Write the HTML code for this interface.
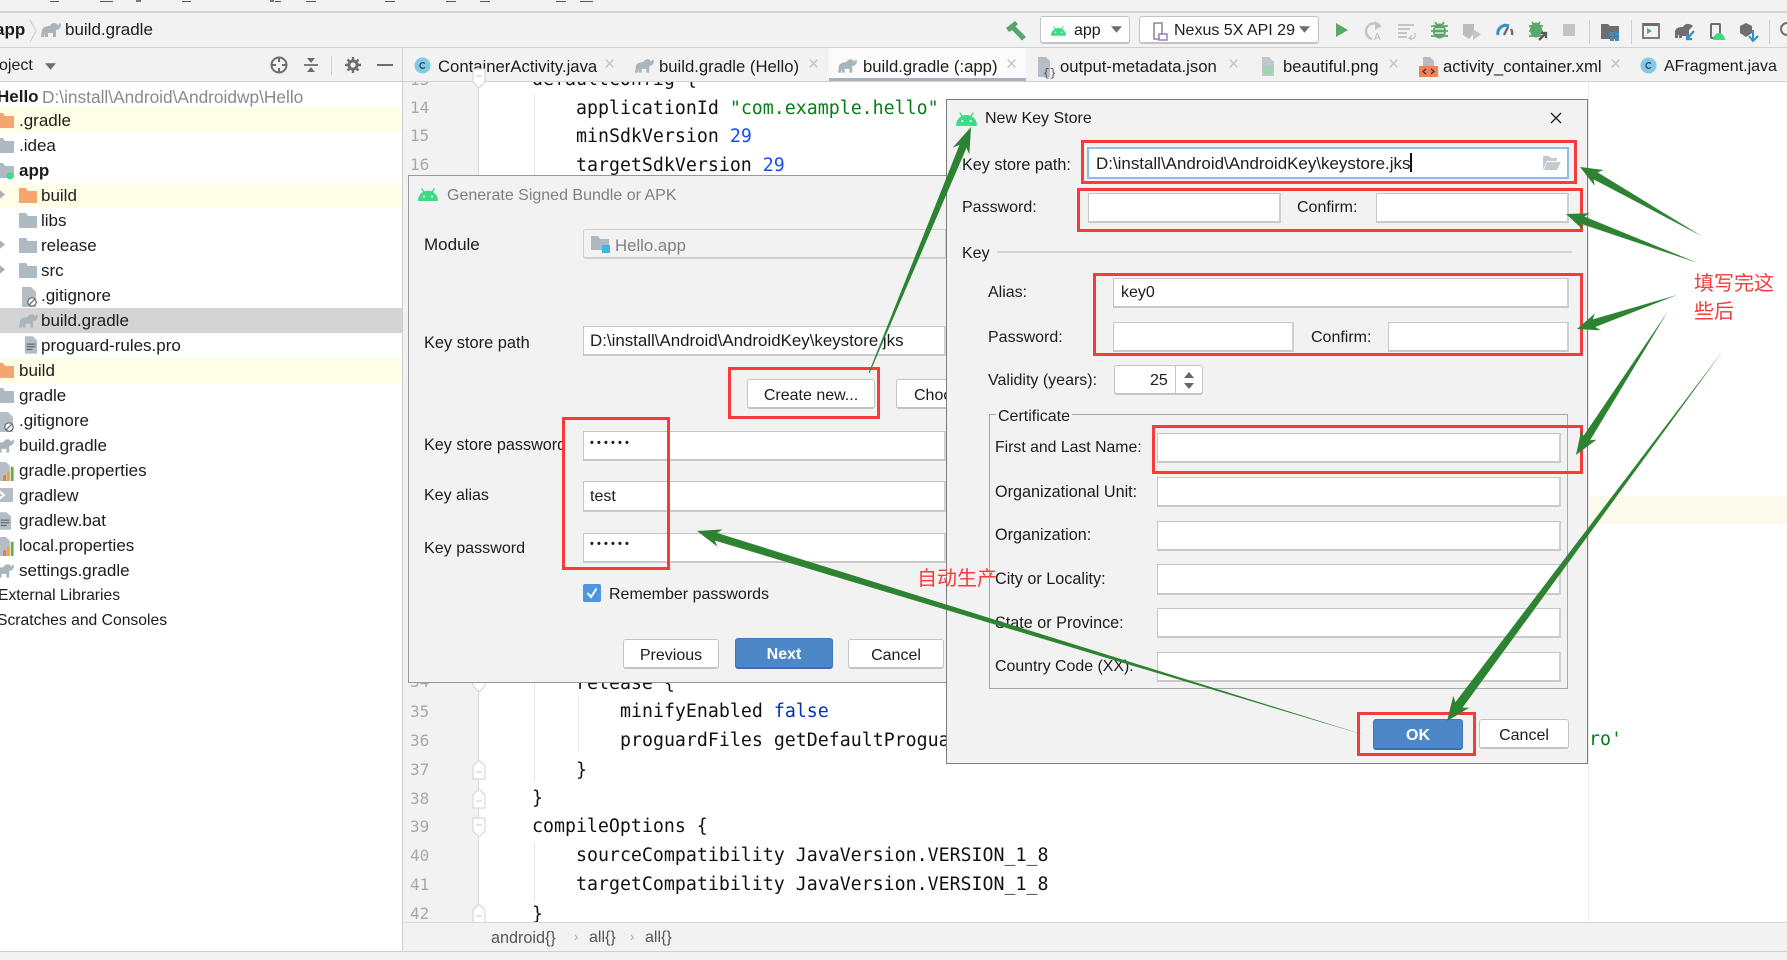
<!DOCTYPE html>
<html><head><meta charset="utf-8"><style>
html,body{margin:0;padding:0;background:#fff}
#p{position:relative;width:1787px;height:960px;overflow:hidden;background:#fff;font:17px/24px "Liberation Sans","Noto Sans CJK SC",sans-serif;color:#1c1c1c}
#p div,#p span.a{position:absolute}
.t{position:absolute;white-space:pre;line-height:24px}
.k{font-size:16px}
.c{position:absolute;white-space:pre;font:18.25px/24px "DejaVu Sans Mono",monospace;color:#111}
.n{position:absolute;font:16px/24px "DejaVu Sans Mono",monospace;color:#a8a8a8;left:410px}
.f{background:#fff;border:1px solid #c6c6c6;border-bottom:2px solid #c9c9c9;border-right:2px solid #d0d0d0;box-sizing:border-box}
.b{background:#fff;border:1px solid #c4c4c4;border-bottom:2px solid #c4c4c4;border-radius:3px;box-sizing:border-box;text-align:center;font-size:16px;line-height:28px}
.bl{background:#4d87c7;border:1px solid #3f78b8;border-bottom:2px solid #3a70ad;border-radius:3px;box-sizing:border-box;text-align:center;font-size:16px;font-weight:bold;line-height:28px;color:#fff}
.r{border:3px solid #f73a3a;box-sizing:border-box}
.x{position:absolute;color:#c4c4c4;font-size:19px;line-height:20px}
svg.i{position:absolute;overflow:visible}
.tab{position:absolute;top:57px;font-size:16.7px;line-height:20px;white-space:pre}
.lab{position:absolute;font-size:16px;white-space:pre;line-height:24px}
.tt{font-size:16px}
.red{position:absolute;white-space:pre;line-height:24px;font-size:20px;color:#f73a3a}
</style></head><body><div id="p">
<svg width="0" height="0" style="position:absolute"><defs>
<symbol id="fg" viewBox="0 0 18 15"><path d="M0 0H7L9 3H18V15H0Z" fill="#aebac1"/></symbol>
<symbol id="fo" viewBox="0 0 18 15"><path d="M0 0H7L9 3H18V15H0Z" fill="#f7a56f"/></symbol>
<symbol id="el" viewBox="0 0 20 15"><path d="M0 15L1 8C2 5 5 4 9 4C10 1 14 0 16 2C17 4 18 3 18.500 1L20 2C20 6 18 8 15 8V15H12V11H7V15H4V11L3 15Z" fill="#a9b5bc"/></symbol>
<symbol id="ad" viewBox="0 0 20 14"><path d="M0 14C0 9 3 6 5 5L3 1.500 4 1 6.300 4.300C8.500 3.500 11.500 3.500 13.700 4.300L16 1 17 1.500 15 5C17 6 20 9 20 14Z" fill="#3ddc84"/><circle cx="6" cy="9.500" r="1" fill="#fff"/><circle cx="14" cy="9.500" r="1" fill="#fff"/></symbol>
<symbol id="cc" viewBox="0 0 18 18"><circle cx="9" cy="9" r="8.500" fill="#7fcbe8"/><path d="M11.500 7A3 3 0 1 0 11.500 11" fill="none" stroke="#334" stroke-width="1.200"/></symbol>
<symbol id="txt" viewBox="0 0 16 20"><path d="M1 0H10L15 5V20H1Z" fill="#b5bec4"/><path d="M3 9H13M3 12H13M3 15H10" stroke="#555" stroke-width="1.200"/></symbol>
<symbol id="ign" viewBox="0 0 16 20"><path d="M1 0H10L15 5V20H1Z" fill="#b5bec4"/><circle cx="11" cy="15" r="4.200" fill="#fff" stroke="#666" stroke-width="1.200"/><path d="M8.200 17.800L13.800 12.200" stroke="#666" stroke-width="1.200"/></symbol>
<symbol id="prop" viewBox="0 0 18 20"><path d="M1 0H9L13 4V20H1Z" fill="#b5bec4"/><rect x="6" y="14" width="3" height="6" fill="#ef7a2c"/><rect x="10" y="10" width="3" height="10" fill="#f2a33a"/><rect x="14" y="5" width="3" height="15" fill="#6aac4a"/></symbol>
<symbol id="dn" viewBox="0 0 10 6"><path d="M0 0H10L5 6Z" fill="#6e6e6e"/></symbol>
<symbol id="tri" viewBox="0 0 6 10"><path d="M0 0L6 5L0 10Z" fill="#aab0b5"/></symbol>
<symbol id="fold" viewBox="0 0 14 20"><path d="M1 6L7 0L13 6V19H1Z" fill="#fff" stroke="#d2d2d2"/><path d="M4 12H10" stroke="#c8c8c8"/></symbol>
<symbol id="foldd" viewBox="0 0 14 20"><path d="M1 1H13V14L7 20L1 14Z" fill="#fff" stroke="#d2d2d2"/><path d="M4 8H10" stroke="#c8c8c8"/></symbol>
</defs></svg>

<!-- top strip -->
<div style="left:0;top:0;width:1787px;height:48px;background:#f2f2f2"></div>
<div style="left:0;top:11px;width:1787px;height:2px;background:#d2d2d2"></div>
<div style="left:50px;top:1px;width:9px;height:1px;background:#555"></div>
<div style="left:100px;top:1px;width:13px;height:1px;background:#555"></div>
<div style="left:136px;top:0;width:5px;height:2px;background:#777"></div>
<div style="left:182px;top:1px;width:9px;height:1px;background:#555"></div>
<div style="left:270px;top:0;width:4px;height:2px;background:#777"></div>
<div style="left:275px;top:1px;width:6px;height:1px;background:#555"></div>
<div style="left:306px;top:1px;width:10px;height:1px;background:#555"></div>
<div style="left:385px;top:1px;width:10px;height:1px;background:#555"></div>
<div style="left:446px;top:1px;width:10px;height:1px;background:#555"></div>
<div style="left:480px;top:1px;width:10px;height:1px;background:#555"></div>
<div style="left:556px;top:1px;width:10px;height:1px;background:#555"></div>
<div style="left:580px;top:1px;width:13px;height:1px;background:#555"></div>
<div style="left:0;top:47px;width:1787px;height:1px;background:#d0d0d0"></div>
<!-- nav -->
<span class="t" style="left:-5px;top:18px;font-weight:bold;font-size:17px">app</span>
<svg class="i" style="left:29px;top:20px" width="8" height="22"><path d="M1 0L7 11L1 22" fill="none" stroke="#c8c8c8"/></svg>
<svg class="i" style="left:41px;top:22px" width="20" height="15"><use href="#el"/></svg>
<span class="t" style="left:65px;top:18px">build.gradle</span>

<!-- toolbar -->
<svg class="i" style="left:1005px;top:20px" width="22" height="22" viewBox="1005 20 22 22"><path d="M1006 28L1015 21L1018 24L1015.500 26.500L1026 37L1022 40.500L1012 30L1009 32Z" fill="#5aa469"/></svg>
<div class="b" style="left:1040px;top:16px;width:90px;height:28px"></div>
<svg class="i" style="left:1051px;top:25px" width="15" height="11"><use href="#ad"/></svg>
<span class="t" style="left:1074px;top:19px;font-size:16px">app</span>
<svg class="i" style="left:1111px;top:26px" width="11" height="7"><use href="#dn"/></svg>
<div class="b" style="left:1139px;top:16px;width:180px;height:28px"></div>
<svg class="i" style="left:1153px;top:22px" width="15" height="20"><path d="M1 1H9V17H1Z" fill="#fff" stroke="#8a8a8a" stroke-width="1.500"/><rect x="6" y="12" width="8" height="6" fill="#fff" stroke="#9a7bc8" stroke-width="1.500"/></svg>
<span class="t" style="left:1174px;top:19px;font-size:16px">Nexus 5X API 29</span>
<svg class="i" style="left:1299px;top:26px" width="11" height="7"><use href="#dn"/></svg>
<svg class="i" style="left:1320px;top:20px" width="467" height="24" viewBox="1320 20 467 24">
<path d="M1336 23L1348 30L1336 37Z" fill="#59a869"/>
<path d="M1379 25A8 8 0 1 0 1372 39" fill="none" stroke="#c5c5c5" stroke-width="2.500"/><path d="M1375 21L1382 26L1375 30Z" fill="#c5c5c5"/>
<text x="1374" y="40" font-size="10" font-family="Liberation Sans" fill="#bdbdbd">A</text>
<path d="M1398 25H1414M1398 29H1410M1398 33H1407M1398 37H1407" stroke="#c5c5c5" stroke-width="2"/><path d="M1415 33V36C1415 38 1412 39 1410 38M1412 35.500L1409 38L1412 40" fill="none" stroke="#c5c5c5" stroke-width="1.300"/>
<ellipse cx="1439.500" cy="31" rx="6.500" ry="7.500" fill="#59a869"/><path d="M1431 26H1448M1431 31H1448M1431 36H1448M1435 22L1437 25M1444 22L1442 25" stroke="#59a869" stroke-width="1.800"/><path d="M1435 29H1444M1435 33H1444" stroke="#f2f2f2" stroke-width="1.300"/>
<path d="M1463 24H1474V33L1469 39L1463 35Z" fill="#bcbcbc"/><path d="M1473 29L1481 34.500L1473 40Z" fill="#c5c5c5"/>
<path d="M1498 35A8 8 0 0 1 1509 26" fill="none" stroke="#3592c4" stroke-width="3"/><path d="M1512 35A8 8 0 0 0 1511 29" fill="none" stroke="#6e6e6e" stroke-width="2.500"/><path d="M1504 35L1508 27" stroke="#6e6e6e" stroke-width="2.500"/>
<ellipse cx="1536" cy="30" rx="6" ry="7.500" fill="#59a869"/><path d="M1529 26H1543M1529 31H1543M1529 36H1543M1532 22L1534 25M1540 22L1538 25" stroke="#59a869" stroke-width="1.800"/><path d="M1539 40L1546 33M1541 33H1546V38" fill="none" stroke="#5a5a5a" stroke-width="2.300"/>
<rect x="1563" y="24" width="12" height="12" fill="#c4c4c4"/>
<rect x="1589" y="20" width="1" height="24" fill="#cfcfcf"/>
<path d="M1601 24H1608L1610 26H1619V39H1601Z" fill="#6e6e6e"/><path d="M1610 32H1614V36H1610ZM1615 32H1619V36H1615ZM1610 37H1614V41H1610ZM1615 37H1619V41H1615Z" fill="#3592c4"/>
<rect x="1631" y="20" width="1" height="24" fill="#cfcfcf"/>
<rect x="1643" y="24" width="16" height="14" fill="none" stroke="#6e6e6e" stroke-width="1.800"/><rect x="1643" y="23" width="16" height="3" fill="#6e6e6e"/><path d="M1647 28L1652 31L1647 34Z" fill="#59a869"/>
<path d="M1675 38V32C1675 28 1679 27 1683 27C1685 23 1690 23 1693 26L1689 30V36H1682V38H1679V35H1678V38Z" fill="#6e6e6e"/><path d="M1694 31L1687 39M1687 34V39H1692" fill="none" stroke="#3592c4" stroke-width="2.200"/>
<rect x="1711" y="24" width="9" height="14" rx="1" fill="none" stroke="#6e6e6e" stroke-width="2"/><path d="M1713 40C1713 36 1716 33 1719 33C1722 33 1725 36 1725 40Z" fill="#3ddc84"/>
<path d="M1746 23L1752 26V33L1746 37L1740 33V26Z" fill="#6e6e6e"/><path d="M1753 30V40M1749 36L1753 41L1758 36" fill="none" stroke="#3592c4" stroke-width="2"/>
<rect x="1769" y="20" width="1" height="24" fill="#cfcfcf"/>
<circle cx="1787" cy="29" r="6" fill="none" stroke="#6e6e6e" stroke-width="2"/>
</svg>

<!-- project bar -->
<div style="left:0;top:48px;width:1787px;height:33px;background:#f2f2f2"></div>
<div style="left:0;top:81px;width:1787px;height:1px;background:#d0d0d0"></div>
<div style="left:402px;top:48px;width:1px;height:903px;background:#d0d0d0"></div>
<span class="t" style="left:-17px;top:54px;font-size:16px">Project</span>
<svg class="i" style="left:45px;top:63px" width="11" height="7"><use href="#dn"/></svg>
<svg class="i" style="left:270px;top:56px" width="130" height="20" viewBox="270 56 130 20">
<circle cx="279" cy="65" r="7.500" fill="none" stroke="#6e6e6e" stroke-width="2"/><path d="M279 57V62M279 68V73M271 65H276M282 65H287" stroke="#6e6e6e" stroke-width="2"/>
<path d="M304 65H318" stroke="#6e6e6e" stroke-width="1.800"/><path d="M307 58H315L311 63ZM307 72H315L311 67Z" fill="#6e6e6e"/>
<rect x="331" y="56" width="1" height="19" fill="#d0d0d0"/>
<circle cx="353" cy="65" r="5.500" fill="#6e6e6e"/><path d="M353 57V73M345 65H361M347.500 59.500L358.500 70.500M358.500 59.500L347.500 70.500" stroke="#6e6e6e" stroke-width="2.400"/><circle cx="353" cy="65" r="2.600" fill="#f2f2f2"/>
<rect x="377" y="64" width="16" height="2" fill="#6e6e6e"/>
</svg>

<!-- tabs -->
<div style="left:829px;top:48px;width:197px;height:33px;background:#fbfbfb"></div>
<div style="left:829px;top:78px;width:197px;height:3px;background:#a8b2bd"></div>
<svg class="i" style="left:414px;top:57px" width="17" height="17"><use href="#cc"/></svg>
<span class="tab" style="left:438px">ContainerActivity.java</span><span class="x" style="left:604px;top:55px">×</span>
<svg class="i" style="left:635px;top:58px" width="19" height="15"><use href="#el"/></svg>
<span class="tab" style="left:659px">build.gradle (Hello)</span><span class="x" style="left:808px;top:55px">×</span>
<svg class="i" style="left:838px;top:58px" width="19" height="15"><use href="#el"/></svg>
<span class="tab" style="left:863px">build.gradle (:app)</span><span class="x" style="left:1006px;top:55px">×</span>
<svg class="i" style="left:1038px;top:57px" width="18" height="20"><path d="M0 0H8L12 4V20H0Z" fill="#b5bec4"/><text x="5" y="19" font-size="11" font-family="Liberation Mono" fill="#444">{}</text></svg>
<span class="tab" style="left:1060px">output-metadata.json</span><span class="x" style="left:1228px;top:55px">×</span>
<svg class="i" style="left:1261px;top:57px" width="14" height="19"><path d="M1 0H8L13 5V19H1Z" fill="#c0c8cd"/><rect x="2" y="9" width="10" height="8" fill="#9fd2b0"/></svg>
<span class="tab" style="left:1283px">beautiful.png</span><span class="x" style="left:1388px;top:55px">×</span>
<svg class="i" style="left:1419px;top:57px" width="19" height="20"><path d="M4 0H11L15 4V9H4Z" fill="#b5bec4"/><rect y="9" width="19" height="11" fill="#ee8358"/><path d="M7 12L4 14.500L7 17M12 12L15 14.500L12 17" fill="none" stroke="#333" stroke-width="1.200"/></svg>
<span class="tab" style="left:1443px">activity_container.xml</span><span class="x" style="left:1610px;top:55px">×</span>
<svg class="i" style="left:1640px;top:57px" width="17" height="17"><use href="#cc"/></svg>
<span class="tab" style="left:1664px;font-size:16px">AFragment.java</span>

<!-- tree -->
<div style="left:0;top:108px;width:402px;height:25px;background:#fefee6"></div>
<div style="left:0;top:183px;width:402px;height:25px;background:#fefee6"></div>
<div style="left:0;top:358px;width:402px;height:25px;background:#fefee6"></div>
<div style="left:0;top:308px;width:402px;height:25px;background:#d4d4d4"></div>
<span class="t" style="left:-3px;top:85px;font-weight:bold">Hello</span>
<span class="t" style="left:42px;top:85px;color:#8a8a8a;font-size:17.300px">D:\install\Android\Androidwp\Hello</span>
<span class="t" style="left:19px;top:109px">.gradle</span>
<span class="t" style="left:19px;top:134px">.idea</span>
<span class="t" style="left:19px;top:159px;font-weight:bold">app</span>
<span class="t" style="left:41px;top:184px">build</span>
<span class="t" style="left:41px;top:209px">libs</span>
<span class="t" style="left:41px;top:234px">release</span>
<span class="t" style="left:41px;top:259px">src</span>
<span class="t" style="left:41px;top:284px">.gitignore</span>
<span class="t" style="left:41px;top:309px">build.gradle</span>
<span class="t" style="left:41px;top:334px">proguard-rules.pro</span>
<span class="t" style="left:19px;top:359px">build</span>
<span class="t" style="left:19px;top:384px">gradle</span>
<span class="t" style="left:19px;top:409px">.gitignore</span>
<span class="t" style="left:19px;top:434px">build.gradle</span>
<span class="t" style="left:19px;top:459px">gradle.properties</span>
<span class="t" style="left:19px;top:484px">gradlew</span>
<span class="t" style="left:19px;top:509px">gradlew.bat</span>
<span class="t" style="left:19px;top:534px">local.properties</span>
<span class="t" style="left:19px;top:559px">settings.gradle</span>
<span class="t" style="left:-2px;top:584px;font-size:15.700px">External Libraries</span>
<span class="t" style="left:-3px;top:609px;font-size:15.700px">Scratches and Consoles</span>
<svg class="i" style="left:-4px;top:113px" width="18" height="15"><use href="#fo"/></svg>
<svg class="i" style="left:-4px;top:138px" width="18" height="15"><use href="#fg"/></svg>
<svg class="i" style="left:-4px;top:163px" width="18" height="15"><use href="#fg"/></svg>
<svg class="i" style="left:6px;top:172px" width="8" height="8"><circle cx="4" cy="4" r="3.500" fill="#3ddc84"/></svg>
<svg class="i" style="left:19px;top:188px" width="18" height="15"><use href="#fo"/></svg>
<svg class="i" style="left:19px;top:213px" width="18" height="15"><use href="#fg"/></svg>
<svg class="i" style="left:19px;top:238px" width="18" height="15"><use href="#fg"/></svg>
<svg class="i" style="left:19px;top:263px" width="18" height="15"><use href="#fg"/></svg>
<svg class="i" style="left:0;top:190px" width="5" height="9"><use href="#tri"/></svg>
<svg class="i" style="left:0;top:240px" width="5" height="9"><use href="#tri"/></svg>
<svg class="i" style="left:0;top:265px" width="5" height="9"><use href="#tri"/></svg>
<svg class="i" style="left:21px;top:287px" width="16" height="20"><use href="#ign"/></svg>
<svg class="i" style="left:19px;top:313px" width="19" height="15"><use href="#el"/></svg>
<svg class="i" style="left:24px;top:336px" width="14" height="18"><use href="#txt"/></svg>
<svg class="i" style="left:-4px;top:363px" width="18" height="15"><use href="#fo"/></svg>
<svg class="i" style="left:-4px;top:388px" width="18" height="15"><use href="#fg"/></svg>
<svg class="i" style="left:-2px;top:412px" width="16" height="20"><use href="#ign"/></svg>
<svg class="i" style="left:-5px;top:438px" width="19" height="15"><use href="#el"/></svg>
<svg class="i" style="left:-3px;top:462px" width="18" height="19"><use href="#prop"/></svg>
<svg class="i" style="left:-4px;top:488px" width="17" height="14"><rect width="17" height="14" fill="#b5bec4"/><path d="M3 3L8 7L3 11" fill="none" stroke="#fff" stroke-width="2"/></svg>
<svg class="i" style="left:-2px;top:512px" width="14" height="18"><use href="#txt"/></svg>
<svg class="i" style="left:-3px;top:537px" width="18" height="19"><use href="#prop"/></svg>
<svg class="i" style="left:-5px;top:563px" width="19" height="15"><use href="#el"/></svg>

<!-- editor -->
<div style="left:403px;top:82px;width:75px;height:840px;background:#f2f2f2"></div>
<div style="left:478px;top:82px;width:1px;height:840px;background:#d8d8d8"></div>
<div style="left:534px;top:95px;width:1px;height:80px;background:#e6e6e6"></div>
<div style="left:534px;top:682px;width:1px;height:100px;background:#e6e6e6"></div>
<div style="left:578px;top:697px;width:1px;height:55px;background:#e6e6e6"></div>
<div style="left:534px;top:842px;width:1px;height:60px;background:#e6e6e6"></div>
<div style="left:1588px;top:82px;width:1px;height:840px;background:#ececec"></div>
<div style="left:1589px;top:496px;width:198px;height:28px;background:#fcfaed"></div>
<svg class="i" style="left:472px;top:68px" width="14" height="20"><use href="#foldd"/></svg>
<svg class="i" style="left:472px;top:672px" width="14" height="20"><use href="#foldd"/></svg>
<svg class="i" style="left:472px;top:760px" width="14" height="20"><use href="#fold"/></svg>
<svg class="i" style="left:472px;top:789px" width="14" height="20"><use href="#fold"/></svg>
<svg class="i" style="left:472px;top:817px" width="14" height="20"><use href="#foldd"/></svg>
<svg class="i" style="left:472px;top:904px" width="14" height="20"><use href="#fold"/></svg>
<div style="left:403px;top:82px;width:1184px;height:840px;overflow:hidden">
<span class="c" style="left:129px;top:-14px">defaultConfig {</span>
<span class="n" style="left:7px;top:-14px">13</span>
</div>
<span class="n" style="top:96px">14</span><span class="n" style="top:124px">15</span><span class="n" style="top:153px">16</span>
<span class="c" style="left:576px;top:97px">applicationId <span style="color:#067d17">"com.example.hello"</span></span>
<span class="c" style="left:576px;top:125px">minSdkVersion <span style="color:#1750eb">29</span></span>
<span class="c" style="left:576px;top:154px">targetSdkVersion <span style="color:#1750eb">29</span></span>
<span class="n" style="top:670px">34</span><span class="c" style="left:576px;top:672px">release {</span>
<span class="n" style="top:700px">35</span><span class="c" style="left:620px;top:700px">minifyEnabled <span style="color:#0033b3">false</span></span>
<span class="n" style="top:729px">36</span><span class="c" style="left:620px;top:729px">proguardFiles getDefaultProguardFile('proguard-android-optimize.txt'), 'proguard-rules.pro'</span>
<span class="n" style="top:758px">37</span><span class="c" style="left:576px;top:759px">}</span>
<span class="n" style="top:787px">38</span><span class="c" style="left:532px;top:787px">}</span>
<span class="n" style="top:815px">39</span><span class="c" style="left:532px;top:815px">compileOptions {</span>
<span class="n" style="top:844px">40</span><span class="c" style="left:576px;top:844px">sourceCompatibility JavaVersion.VERSION_1_8</span>
<span class="n" style="top:873px">41</span><span class="c" style="left:576px;top:873px">targetCompatibility JavaVersion.VERSION_1_8</span>
<span class="n" style="top:902px">42</span><span class="c" style="left:532px;top:903px">}</span>
<div style="left:1589px;top:722px;width:198px;height:36px;background:#fff"></div>
<span class="c" style="left:1589px;top:728px;color:#067d17">ro'</span>

<!-- bottom -->
<div style="left:403px;top:922px;width:1384px;height:29px;background:#f2f2f2;border-top:1px solid #d8d8d8;box-sizing:border-box"></div>
<div style="left:0;top:951px;width:1787px;height:9px;background:#f2f2f2;border-top:1px solid #cfcfcf;box-sizing:border-box"></div>
<span class="t" style="left:491px;top:926px;color:#555;font-size:16.200px">android{}</span>
<span class="t" style="left:574px;top:925px;color:#aaa;font-size:13px">›</span>
<span class="t" style="left:589px;top:926px;color:#555;font-size:16px">all{}</span>
<span class="t" style="left:630px;top:925px;color:#aaa;font-size:13px">›</span>
<span class="t" style="left:645px;top:926px;color:#555;font-size:16px">all{}</span>

<!-- generate dialog -->
<div style="left:408px;top:175px;width:540px;height:508px;background:#f2f2f2;border:1px solid #999;box-sizing:border-box"></div>
<svg class="i" style="left:418px;top:187px" width="20" height="14"><use href="#ad"/></svg>
<span class="t" style="left:447px;top:184px;color:#808080;font-size:16px">Generate Signed Bundle or APK</span>
<span class="t" style="left:424px;top:233px">Module</span>
<div style="left:583px;top:229px;width:363px;height:30px;background:#f2f2f2;border:1px solid #cfcfcf;border-bottom:2px solid #cfcfcf;border-radius:3px 0 0 3px;box-sizing:border-box"></div>
<svg class="i" style="left:591px;top:236px" width="20" height="17"><path d="M0 0H7L9 3H18V14H0Z" fill="#aebac1"/><rect x="11" y="9" width="8" height="8" fill="#40b6e0"/></svg>
<span class="t" style="left:615px;top:234px;color:#808080;font-size:16.800px">Hello.app</span>
<span class="t" style="left:424px;top:331px;font-size:16.400px">Key store path</span>
<div class="f" style="left:583px;top:326px;width:363px;height:30px"></div>
<span class="t" style="left:590px;top:329px;font-size:16.900px">D:\install\Android\AndroidKey\keystore.jks</span>
<div class="b" style="left:747px;top:379px;width:128px;height:30px;padding-top:2px">Create new...</div>
<div style="left:896px;top:379px;width:50px;height:30px;background:#fff;border:1px solid #c4c4c4;border-right:0;border-bottom:2px solid #c4c4c4;border-radius:3px 0 0 3px;box-sizing:border-box;overflow:hidden;font-size:16px;line-height:28px;padding-left:17px;white-space:nowrap;padding-top:2px">Choose existing...</div>
<span class="t" style="left:424px;top:433px;font-size:16.200px">Key store password</span>
<div class="f" style="left:583px;top:431px;width:363px;height:30px"></div>
<span class="t" style="left:590px;top:431px;font-size:11px;letter-spacing:3.150px;font-weight:bold">••••••</span>
<span class="t" style="left:424px;top:484px;font-size:16px">Key alias</span>
<div class="f" style="left:583px;top:481px;width:363px;height:31px"></div>
<span class="t" style="left:590px;top:485px;font-size:16px">test</span>
<span class="t" style="left:424px;top:536px;font-size:16.100px">Key password</span>
<div class="f" style="left:583px;top:533px;width:363px;height:30px"></div>
<span class="t" style="left:590px;top:532px;font-size:11px;letter-spacing:3.150px;font-weight:bold">••••••</span>
<svg class="i" style="left:583px;top:584px" width="18" height="18"><rect width="18" height="18" rx="2" fill="#4d97e0"/><path d="M4.500 9L8 13L13.500 4.500" fill="none" stroke="#fff" stroke-width="2"/></svg>
<span class="t" style="left:609px;top:583px;font-size:16px">Remember passwords</span>
<div class="b" style="left:623px;top:639px;width:96px;height:30px;padding-top:2px">Previous</div>
<div class="bl" style="left:735px;top:638px;width:98px;height:31px;padding-top:2px">Next</div>
<div class="b" style="left:848px;top:639px;width:96px;height:30px;padding-top:2px">Cancel</div>

<!-- key store dialog -->
<div style="left:946px;top:99px;width:642px;height:665px;background:#f2f2f2;border:1px solid #7c7c7c;box-sizing:border-box"></div>
<svg class="i" style="left:956px;top:111px" width="21" height="15"><use href="#ad"/></svg>
<span class="t k" style="left:985px;top:107px">New Key Store</span>
<svg class="i" style="left:1550px;top:112px" width="12" height="12"><path d="M1 1L11 11M11 1L1 11" stroke="#222" stroke-width="1.300"/></svg>
<span class="lab" style="left:962px;top:153px;font-size:16.200px">Key store path:</span>
<div style="left:1087px;top:147px;width:482px;height:32px;background:#fff;border:2px solid #8fbbe8;box-sizing:border-box"></div>
<span class="lab" style="left:1096px;top:152px;font-size:16.950px">D:\install\Android\AndroidKey\keystore.jks</span>
<div style="left:1410px;top:153px;width:2px;height:19px;background:#111"></div>
<svg class="i" style="left:1542px;top:155px" width="19" height="16"><path d="M1 15V1H7L9 3H15V6H5L1 15ZM5 7H19L15 15H2Z" fill="#c3cbd0"/></svg>
<span class="lab" style="left:962px;top:196px">Password:</span>
<div class="f" style="left:1088px;top:193px;width:193px;height:30px"></div>
<span class="lab" style="left:1297px;top:196px">Confirm:</span>
<div class="f" style="left:1376px;top:193px;width:193px;height:30px"></div>
<span class="lab" style="left:962px;top:242px">Key</span>
<div style="left:997px;top:251px;width:575px;height:2px;background:#d4d4d4"></div>
<span class="lab" style="left:988px;top:281px">Alias:</span>
<div class="f" style="left:1113px;top:278px;width:456px;height:30px"></div>
<span class="lab" style="left:1121px;top:281px">key0</span>
<span class="lab" style="left:988px;top:326px">Password:</span>
<div class="f" style="left:1113px;top:322px;width:181px;height:30px"></div>
<span class="lab" style="left:1311px;top:326px">Confirm:</span>
<div class="f" style="left:1388px;top:322px;width:181px;height:30px"></div>
<span class="lab" style="left:988px;top:369px">Validity (years):</span>
<div class="b" style="left:1114px;top:365px;width:89px;height:30px"></div>
<div style="left:1175px;top:365px;width:1px;height:29px;background:#c4c4c4"></div>
<span class="lab" style="left:1150px;top:369px">25</span>
<svg class="i" style="left:1183px;top:372px" width="12" height="17"><path d="M1 6L6 0L11 6ZM1 11H11L6 17Z" fill="#666"/></svg>
<div style="left:989px;top:414px;width:579px;height:275px;border:1px solid #a8a8a8;box-sizing:border-box"></div>
<span class="lab" style="left:996px;top:405px;background:#f2f2f2;padding:0 2px;line-height:23px">Certificate</span>
<span class="lab" style="left:995px;top:436px;font-size:15.800px">First and Last Name:</span>
<div class="f" style="left:1157px;top:433px;width:404px;height:30px"></div>
<span class="lab" style="left:995px;top:480px;font-size:16.200px">Organizational Unit:</span>
<div class="f" style="left:1157px;top:477px;width:404px;height:30px"></div>
<span class="lab" style="left:995px;top:523px;font-size:16.200px">Organization:</span>
<div class="f" style="left:1157px;top:521px;width:404px;height:30px"></div>
<span class="lab" style="left:995px;top:567px;font-size:16.200px">City or Locality:</span>
<div class="f" style="left:1157px;top:564px;width:404px;height:31px"></div>
<span class="lab" style="left:995px;top:611px;font-size:16.200px">State or Province:</span>
<div class="f" style="left:1157px;top:608px;width:404px;height:30px"></div>
<span class="lab" style="left:995px;top:655px;font-size:15.900px">Country Code (XX):</span>
<div class="f" style="left:1157px;top:652px;width:404px;height:30px"></div>
<div class="bl" style="left:1373px;top:719px;width:90px;height:31px;padding-top:2px">OK</div>
<div class="b" style="left:1479px;top:719px;width:90px;height:30px;padding-top:2px">Cancel</div>

<!-- red boxes -->
<div class="r" style="left:728px;top:367px;width:152px;height:52px"></div>
<div class="r" style="left:562px;top:417px;width:108px;height:153px"></div>
<div class="r" style="left:1081px;top:140px;width:496px;height:44px"></div>
<div class="r" style="left:1077px;top:188px;width:506px;height:44px"></div>
<div class="r" style="left:1093px;top:273px;width:490px;height:83px"></div>
<div class="r" style="left:1152px;top:425px;width:431px;height:49px"></div>
<div class="r" style="left:1357px;top:712px;width:119px;height:44px"></div>

<!-- red text -->
<span class="red" style="left:917px;top:567px">自动生产</span>
<span class="red" style="left:1694px;top:272px">填写完这</span>
<span class="red" style="left:1694px;top:300px">些后</span>

<!-- arrows -->
<svg class="i" style="left:0;top:0" width="1787" height="960" fill="#2e8332">
<polygon transform="translate(971,127) rotate(112.5)" points="0,0 26,-9 21,-3.800 266,-0.500 266,0.500 21,3.800 26,9"/>
<polygon transform="translate(1580,167) rotate(29.6)" points="0,0 22,-9 18,-4 141,0 18,4 22,9"/>
<polygon transform="translate(1566,214) rotate(20.4)" points="0,0 22,-9 18,-4 141,0 18,4 22,9"/>
<polygon transform="translate(1577,329) rotate(-18.8)" points="0,0 22,-9 18,-4 106,0 18,4 22,9"/>
<polygon transform="translate(1576,455) rotate(-57.4)" points="0,0 24,-9 20,-4 171,0 20,4 24,9"/>
<polygon transform="translate(1447,721) rotate(-53.3)" points="0,0 24,-10 20,-4.500 463,0 20,4.500 24,10"/>
<polygon transform="translate(697,531) rotate(17)" points="0,0 24,-9 20,-4 703,0 20,4 24,9"/>
</svg>
</div></body></html>
